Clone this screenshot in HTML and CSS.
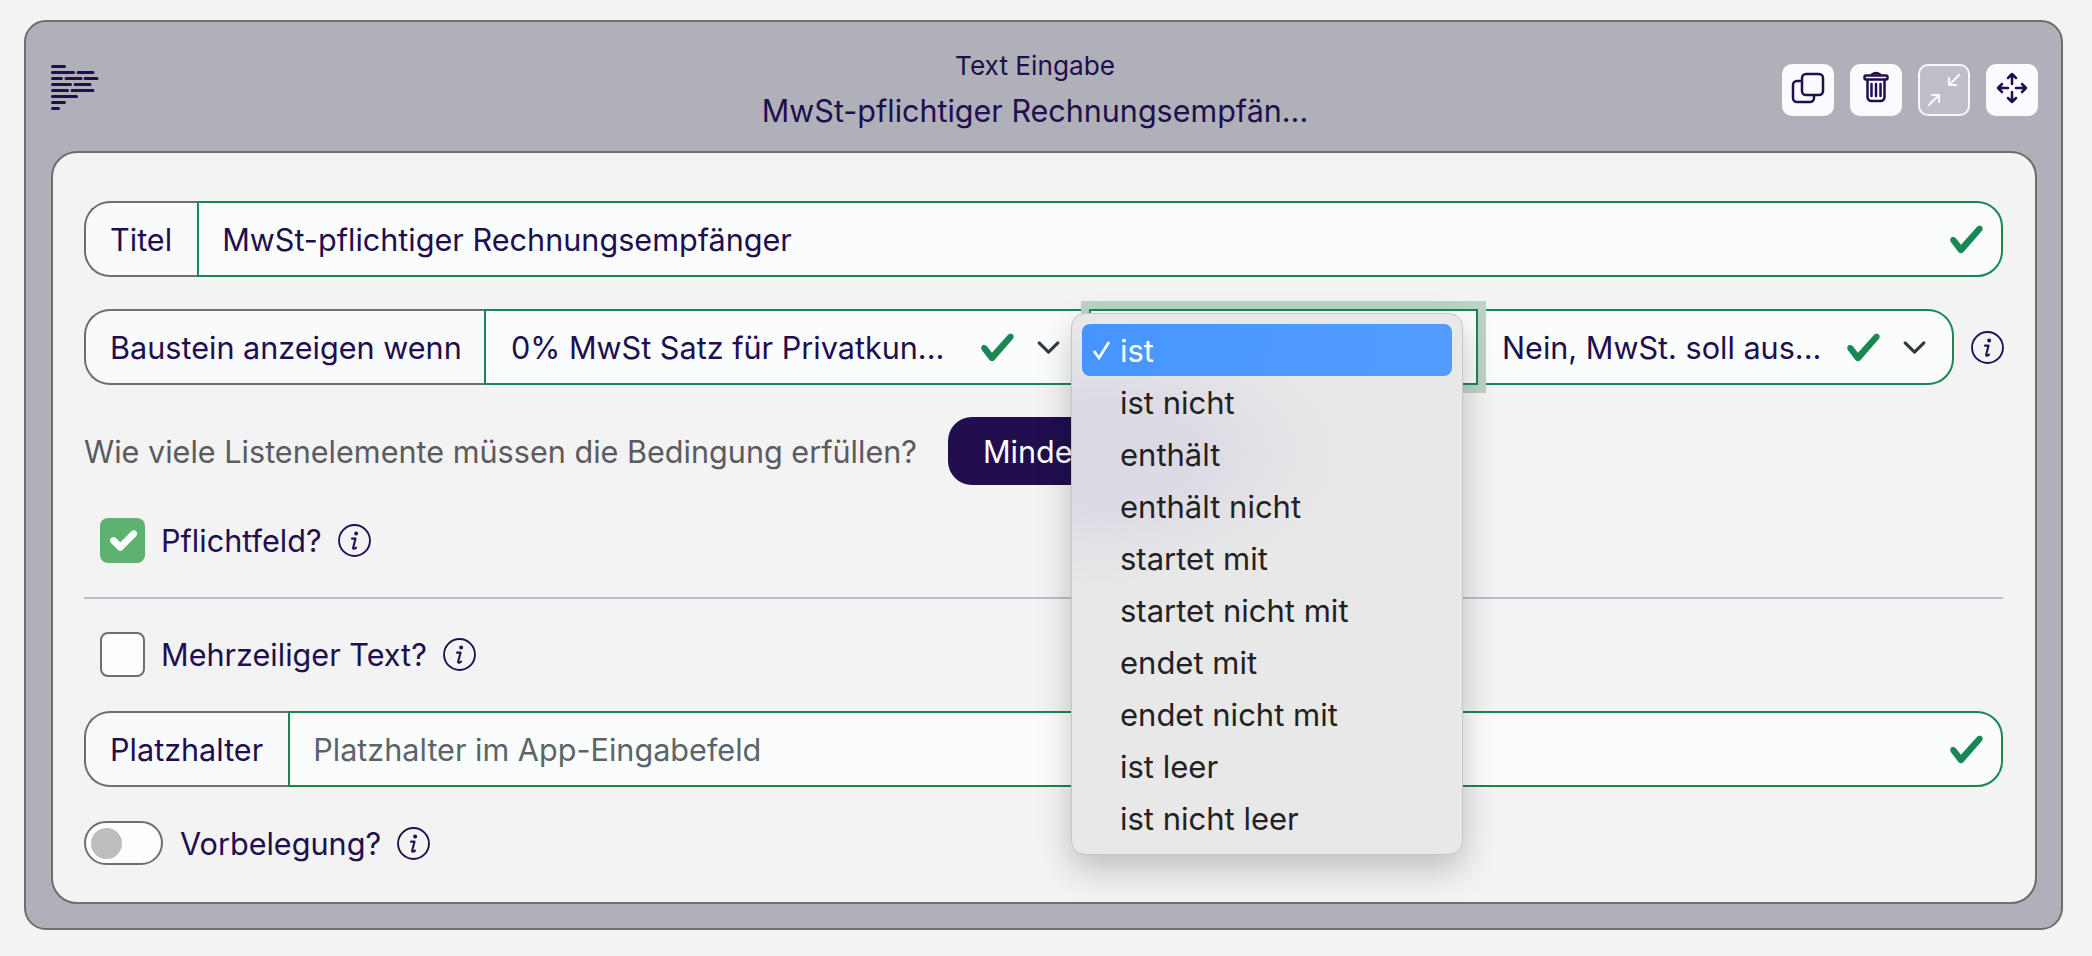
FILE: index.html
```html
<!doctype html>
<html lang="de">
<head>
    <meta charset="UTF-8">
    <title>Text Eingabe</title>
    <link rel="stylesheet" href="styles.css">
</head>
<body>
    <svg width="0" height="0" class="defs">
        <symbol id="valid" viewBox="0 0 8 8"><path fill="#198754" d="M2.3 6.73.6 4.53c-.4-1.04.46-1.4 1.1-.8l1.1 1.4 3.4-3.8c.6-.63 1.6-.27 1.2.7l-4 4.6c-.43.5-.8.4-1.1.1z"/></symbol>
        <symbol id="chevron" viewBox="0 0 16 16"><path fill="none" stroke="#343a40" stroke-linecap="round" stroke-linejoin="round" stroke-width="2" d="m2 5 6 6 6-6"/></symbol>
        <symbol id="info" viewBox="0 0 32 32">
            <circle cx="16" cy="16" r="15" fill="none" stroke="#200e4f" stroke-width="1.8"/>
            <circle cx="17.6" cy="9.2" r="1.9" fill="#200e4f"/>
            <path fill="none" stroke="#200e4f" stroke-width="2" stroke-linecap="round" stroke-linejoin="round" d="M13.6 14.2h3.4l-2.3 8.6c-.3 1.3.7 1.7 2.8.1"/>
        </symbol>
    </svg>

    <div class="card">
        <div class="card-head">
            <svg class="logo" viewBox="0 0 48 45" width="48" height="45">
                <path d="M1.5 1.500h12M1.500 7.500h21M27 7.500h15M1.500 13.500h9M15 13.500h15M34 13.500h12M1.500 19.500h18M24 19.500h15M1.500 25.500h15M21 25.500h21M1.500 31.500h24M1.500 37.500h12M1.500 43.500h6"/>
            </svg>
            <div class="head-title">
                <div class="type">Text Eingabe</div>
                <div class="name">MwSt-pflichtiger Rechnungsempfän...</div>
            </div>
            <div class="actions">
                <button class="act">
                    <svg viewBox="0 0 52 52"><rect x="20" y="10" width="21" height="21" rx="4"/><path d="M18 17h-3a4 4 0 0 0-4 4v13a4 4 0 0 0 4 4h13a4 4 0 0 0 4-4v-3"/></svg>
                </button>
                <button class="act">
                    <svg viewBox="0 0 52 52"><rect x="14.5" y="11.5" width="23" height="4" rx="1.5"/><path d="M22 10.5q4-3 8 0M17.5 16v17a4 4 0 0 0 4 4h9a4 4 0 0 0 4-4V16M21.500 20v12M26 20v12M30.500 20v12"/></svg>
                </button>
                <button class="act act-off">
                    <svg viewBox="0 0 48 48"><path d="M39 9 29 19M29 12v7h7M9 39l10-10M12 29h7v7"/></svg>
                </button>
                <button class="act">
                    <svg viewBox="0 0 52 52"><path d="M26 10v10M26 28v10M12 24h10M30 24h10M22 14l4-4 4 4M22 34l4 4 4-4M16 20l-4 4 4 4M36 20l4 4-4 4"/></svg>
                </button>
            </div>
        </div>

        <div class="card-body">
            <div class="group">
                <div class="label">Titel</div>
                <div class="field grow">
                    <span class="val">MwSt-pflichtiger Rechnungsempfänger</span>
                    <svg class="ok"><use href="#valid"/></svg>
                </div>
            </div>

            <div class="cond-row">
                <div class="group grow">
                    <div class="label label-cond">Baustein anzeigen wenn</div>
                    <div class="field sel sel-1">
                        <span class="val">0% MwSt Satz für Privatkun...</span>
                        <svg class="ok"><use href="#valid"/></svg>
                        <svg class="chev"><use href="#chevron"/></svg>
                    </div>
                    <div class="field sel sel-2"></div>
                    <div class="field sel sel-3">
                        <span class="val">Nein, MwSt. soll aus...</span>
                        <svg class="ok"><use href="#valid"/></svg>
                        <svg class="chev"><use href="#chevron"/></svg>
                    </div>
                </div>
                <svg class="info"><use href="#info"/></svg>
            </div>

            <div class="count-row">
                <span class="count-text">Wie viele Listenelemente müssen die Bedingung erfüllen?</span>
                <button class="pill">Mindestens 1</button>
            </div>

            <div class="check-row first">
                <span class="box on">
                    <svg viewBox="0 0 20 20"><path d="m6 10 3 3 6-6"/></svg>
                </span>
                <span class="check-label">Pflichtfeld?</span>
                <svg class="info"><use href="#info"/></svg>
            </div>

            <div class="rule"></div>

            <div class="check-row">
                <span class="box"></span>
                <span class="check-label">Mehrzeiliger Text?</span>
                <svg class="info"><use href="#info"/></svg>
            </div>

            <div class="group ph-group">
                <div class="label">Platzhalter</div>
                <div class="field grow">
                    <span class="val ph">Platzhalter im App-Eingabefeld</span>
                    <svg class="ok"><use href="#valid"/></svg>
                </div>
            </div>

            <div class="switch-row">
                <span class="switch"><span class="knob"></span></span>
                <span class="check-label">Vorbelegung?</span>
                <svg class="info"><use href="#info"/></svg>
            </div>

            <ul class="menu">
                <li class="sel-item">
                    <svg class="tick" viewBox="0 0 20 20"><path d="M2 11l5 7L17 2"/></svg>
                    ist
                </li>
                <li>ist nicht</li>
                <li>enthält</li>
                <li>enthält nicht</li>
                <li>startet mit</li>
                <li>startet nicht mit</li>
                <li>endet mit</li>
                <li>endet nicht mit</li>
                <li>ist leer</li>
                <li>ist nicht leer</li>
            </ul>
        </div>
    </div>
</body>
</html>
```
FILE: styles.css
```css
*{
    margin:0;
    padding:0;
    box-sizing:border-box;
}
ul{
    list-style:none;
}
html,body{
    height:100%;
}
body{
    background:#f3f3f3;
    padding:20px 29px 0 24px;
    font-family:Inter,"Liberation Sans",sans-serif;
    font-size:30.6px;
    color:#200e4f;
    overflow:hidden;
}
.defs{
    position:absolute;
}

/*card*/
.card{
    height:910px;
    background:#b0b0b9;
    border:2px solid #6e6e6e;
    border-radius:22px;
    padding:0 24px 0 25px;
}
.card-head{
    height:129px;
    display:flex;
    align-items:flex-start;
}
.logo{
    margin-top:43px;
    flex:none;
}
.logo path{
    fill:none;
    stroke:#200e4f;
    stroke-width:3;
    stroke-linecap:round;
}
.head-title{
    flex:1;
    text-align:center;
    padding:22px 0 0 189px;
}
.type{
    font-size:26.2px;
    line-height:44px;
}
.name{
    font-size:30.5px;
    line-height:46px;
}
.actions{
    display:flex;
    gap:16px;
    margin-top:42px;
    margin-right:-1px;
}
.act{
    width:52px;
    height:52px;
    background:#fbfaff;
    border:none;
    border-radius:10px;
    display:block;
}
.act svg{
    display:block;
    width:52px;
    height:52px;
    fill:none;
    stroke:#200e4f;
    stroke-width:2.5;
    stroke-linecap:round;
    stroke-linejoin:round;
}
.act-off{
    background:#bfbfca;
    border:2px solid #f8f8ff;
}
.act-off svg{
    width:48px;
    height:48px;
    stroke:#f8f8ff;
    stroke-width:2.2;
}

/*body*/
.card-body{
    position:relative;
    height:753px;
    background:#f3f3f3;
    border:2px solid #6e6e6e;
    border-radius:26px;
    padding:48px 32px 0 31px;
}
.group{
    display:flex;
    height:76px;
}
.grow{
    flex:1;
}
.label{
    display:flex;
    align-items:center;
    padding:0 25px 0 24px;
    background:#f9fafc;
    border:2px solid #6e6e6e;
    border-right:none;
    border-radius:26px 0 0 26px;
    white-space:nowrap;
}
.label-cond{
    width:400px;
    flex:none;
}
.field{
    display:flex;
    align-items:center;
    background:#fbfdfc;
    border:2px solid #198754;
    padding:0 16px 0 23px;
    min-width:0;
}
.group > .field:last-child{
    border-radius:0 26px 26px 0;
}
.val{
    flex:1;
    white-space:nowrap;
}
.ph{
    color:#5c636a;
}
.ok{
    width:37px;
    height:37px;
    flex:none;
}
.chev{
    width:25px;
    height:25px;
    flex:none;
    margin-left:20px;
}
.cond-row{
    display:flex;
    align-items:center;
    margin-top:32px;
}
.sel{
    flex:none;
}
.sel-1{
    width:605px;
    padding-right:28px;
    padding-left:25px;
    border-right:none;
}
.sel-2{
    width:389px;
    position:relative;
    box-shadow:0 0 0 8px #bdd3c7;
}
.sel-3{
    flex:1;
    border-left:none;
    padding-right:25px;
    padding-left:24px;
}
.info{
    width:33px;
    height:33px;
    flex:none;
}
.cond-row > .info{
    margin-left:17px;
    margin-right:-1px;
}

.count-row{
    display:flex;
    align-items:center;
    margin-top:32px;
    height:68px;
}
.count-text{
    color:#5a5a5f;
}
.pill{
    margin-left:31px;
    height:68px;
    padding:0 35px;
    background:#200e4f;
    color:#fff;
    border:none;
    border-radius:24px;
    font:inherit;
}

.check-row{
    display:flex;
    align-items:center;
    padding-left:16px;
    margin-top:35px;
    height:45px;
}
.check-row.first{
    margin-top:33px;
}
.box{
    width:45px;
    height:45px;
    flex:none;
    background:#fcfdfd;
    border:2px solid #6e6e6e;
    border-radius:8px;
}
.box.on{
    background:#5db272;
    border:none;
    display:block;
}
.box svg{
    display:block;
    width:45px;
    height:45px;
    fill:none;
    stroke:#fff;
    stroke-width:3;
    stroke-linecap:round;
    stroke-linejoin:round;
}
.check-label{
    margin-left:16px;
    margin-right:16px;
}
.rule{
    height:2px;
    background:#bdbbcd;
    margin-top:34px;
}
.rule + .check-row{
    margin-top:33px;
}
.ph-group{
    margin-top:34px;
}
.switch-row{
    display:flex;
    align-items:center;
    margin-top:34px;
    height:44px;
}
.switch{
    width:79px;
    height:44px;
    flex:none;
    background:#fcfdfd;
    border:2px solid #6e6e6e;
    border-radius:22px;
    padding:5px;
}
.knob{
    display:block;
    width:31px;
    height:31px;
    border-radius:50%;
    background:#bcbdbc;
}
.switch + .check-label{
    margin-left:17px;
}

/*aufgeklappte Auswahl*/
.menu{
    position:absolute;
    left:1018px;
    top:160px;
    width:392px;
    height:542px;
    padding:10px;
    border:1px solid #c6c6c6;
    border-radius:14px;
    background:radial-gradient(ellipse 235px 130px at 30px 140px,#dad9e4 0%,#dcdbe5 40%,#e8e8e8 100%) #e8e8e8;
    box-shadow:0 14px 34px rgba(0,0,0,.22);
    color:#222;
    font-size:31px;
}
.menu li{
    display:flex;
    align-items:center;
    height:52px;
    padding-left:38px;
    position:relative;
    border-radius:8px;
}
.menu .sel-item{
    background:linear-gradient(100deg,#4695ff,#529cff);
    color:#fff;
}
.tick{
    position:absolute;
    left:10px;
    top:16px;
    width:20px;
    height:20px;
    fill:none;
    stroke:#fff;
    stroke-width:2.6;
}
```
